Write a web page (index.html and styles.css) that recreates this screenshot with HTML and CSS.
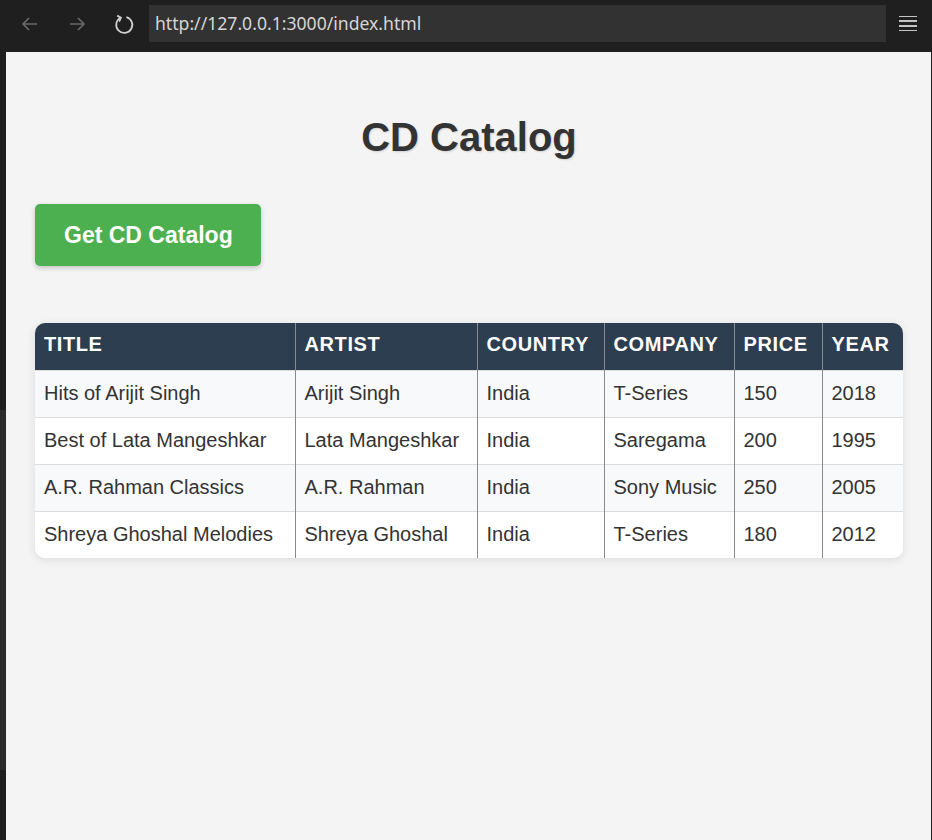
FILE: index.html
```html
<!DOCTYPE html>
<html lang="en">
<head>
<meta charset="utf-8">
<title>CD Catalog</title>
<link rel="stylesheet" href="styles.css">
</head>
<body>
<div class="chrome">
  <div class="nav">
    <svg class="ico dim" width="20" height="20" viewBox="0 0 20 20"><path d="M17 10H3M9 4l-6 6 6 6" fill="none" stroke="currentColor" stroke-width="1.6"/></svg>
    <svg class="ico dim" width="20" height="20" viewBox="0 0 20 20"><path d="M3 10h14M11 4l6 6-6 6" fill="none" stroke="currentColor" stroke-width="1.6"/></svg>
    <svg class="ico lit" width="22" height="22" viewBox="0 0 20 20"><path d="M6.8 4.3A7.3 7.3 0 1 0 12.2 3.7" fill="none" stroke="currentColor" stroke-width="1.6"/><path d="M3.8 2.4L7.2 4.2L5.6 7.8" fill="none" stroke="currentColor" stroke-width="1.6"/></svg>
  </div>
  <div class="url">http://127.0.0.1:3000/index.html</div>
  <div class="menu"><span></span><span></span><span></span><span></span></div>
</div>
<div class="frame">
  <div class="side"><div class="side-mid"></div></div>
  <main class="page">
    <h1 class="title">CD Catalog</h1>
    <button class="btn">Get CD Catalog</button>
    <div class="table-wrap">
      <table class="cat">
        <thead>
          <tr><th class="c1">TITLE</th><th class="c2">ARTIST</th><th class="c3">COUNTRY</th><th class="c4">COMPANY</th><th class="c5">PRICE</th><th class="c6">YEAR</th></tr>
        </thead>
        <tbody>
          <tr><td>Hits of Arijit Singh</td><td>Arijit Singh</td><td>India</td><td>T-Series</td><td>150</td><td>2018</td></tr>
          <tr><td>Best of Lata Mangeshkar</td><td>Lata Mangeshkar</td><td>India</td><td>Saregama</td><td>200</td><td>1995</td></tr>
          <tr><td>A.R. Rahman Classics</td><td>A.R. Rahman</td><td>India</td><td>Sony Music</td><td>250</td><td>2005</td></tr>
          <tr><td>Shreya Ghoshal Melodies</td><td>Shreya Ghoshal</td><td>India</td><td>T-Series</td><td>180</td><td>2012</td></tr>
        </tbody>
      </table>
    </div>
  </main>
  <div class="edge"></div>
</div>
</body>
</html>
```
FILE: styles.css
```css
* { box-sizing: border-box; }
html, body { margin: 0; padding: 0; }
body {
  width: 932px;
  height: 840px;
  overflow: hidden;
  background: #1e1e1e;
  font-family: "Liberation Sans", Arial, sans-serif;
}
.chrome {
  height: 52px;
  display: flex;
  align-items: center;
  background: #1f1f1f;
  border-left: 1px solid #1f1f1f;
}
.nav {
  display: flex;
  align-items: center;
  gap: 27px;
  padding-left: 19px;
  width: 148px;
  margin-top: -4px;
}
.ico { display: block; }
.ico.dim { color: #6a6a6a; }
.ico.lit { color: #cfcfcf; margin-left: -1px; }
.url {
  width: 737px;
  height: 37px;
  background: #323232;
  color: #d6d6d6;
  font-family: "Noto Sans", "Liberation Sans", sans-serif;
  font-size: 17.6px;
  line-height: 37px;
  padding-left: 6px;
  letter-spacing: 0;
  margin-top: -5px;
}
.menu {
  margin-left: 13px;
  display: flex;
  flex-direction: column;
  gap: 3px;
  margin-top: -5px;
}
.menu span {
  display: block;
  width: 18px;
  height: 1.6px;
  background: #c4c4c4;
}
.frame {
  display: flex;
  height: 788px;
}
.side {
  width: 6px;
  background: #1e1e1e;
  padding-top: 358px;
}
.side-mid {
  height: 360px;
  background: #2b2b2b;
}
.edge { width: 1px; background: #1e1e1e; }
.page {
  flex: 1;
  background: #f4f4f4;
  padding: 62px 28px 0 29px;
}
.title {
  margin: 0 0 44px;
  text-align: center;
  font-size: 40px;
  font-weight: bold;
  color: #333;
  text-shadow: 1px 1px 2px rgba(0, 0, 0, 0.15);
  line-height: 46px;
}
.btn {
  display: block;
  border: none;
  background: #4caf50;
  color: #fff;
  font-family: "Liberation Sans", Arial, sans-serif;
  font-weight: bold;
  font-size: 23px;
  line-height: 26px;
  padding: 18px 28px 18px 29px;
  border-radius: 5px;
  box-shadow: 0 2px 5px rgba(0, 0, 0, 0.2);
  cursor: pointer;
}
.table-wrap {
  margin-top: 57px;
  width: 868px;
  border-radius: 10px;
  overflow: hidden;
  background: #fff;
  box-shadow: 0 2px 10px rgba(0, 0, 0, 0.1);
}
.cat {
  width: 100%;
  border-collapse: collapse;
  table-layout: fixed;
  font-size: 20px;
  color: #333;
}
.cat th, .cat td {
  text-align: left;
  padding: 12px 9px;
  line-height: 23px;
  border-left: 1px solid #8a8a8a;
  white-space: nowrap;
}
.cat th:first-child, .cat td:first-child { border-left: none; }
.cat th {
  background: #2c3e50;
  color: #fff;
  font-weight: bold;
  letter-spacing: 0.6px;
  padding-top: 10px;
  padding-bottom: 14px;
}
.cat td {
  border-top: 1px solid #dcdcdc;
  padding-top: 11px;
  padding-bottom: 12px;
}
.cat tbody tr:nth-child(odd) td { background: #f8f9fa; }
.cat tbody tr:nth-child(even) td { background: #fff; }
.c1 { width: 260px; }
.c2 { width: 182px; }
.c3 { width: 127px; }
.c4 { width: 130px; }
.c5 { width: 88px; }
.c6 { width: 81px; }
```
